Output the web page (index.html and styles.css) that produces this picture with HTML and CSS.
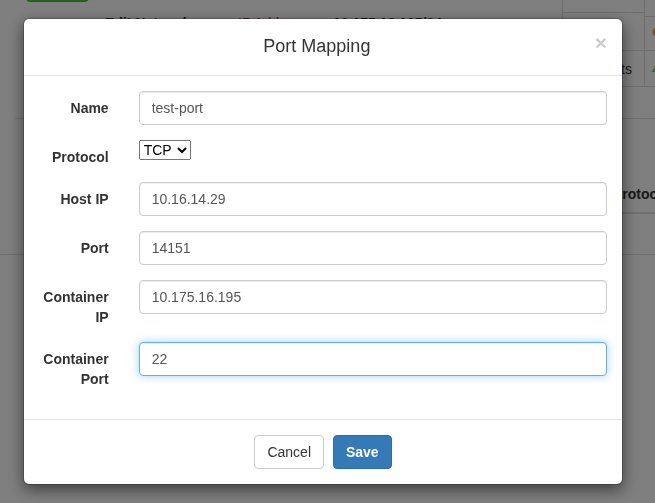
FILE: index.html
```html
<!DOCTYPE html>
<html lang="en">
<head>
<meta charset="utf-8">
<title>Port Mapping</title>
<link rel="stylesheet" href="styles.css">
</head>
<body>
<div class="page">
  <div class="top">
    <div class="main">
      <div class="btn-stub"></div>
      <div class="info-line"><span class="info-k">Edit Networks</span><span class="info-ip">IP Address</span><span class="info-v">10.175.16.195/24</span></div>
    </div>
    <div class="c2"></div><div class="c3"></div>
    <div class="c2"></div><div class="c3"><span class="orange">e</span></div>
    <div class="c2 txt">Contexts</div><div class="c3"><span class="green">4</span></div>
  </div>
  <div class="divider"></div>
  <div class="tbl">
    <div class="th-row"><div class="th"></div><div class="th">Name</div><div class="th">Host</div><div class="th">Container</div><div class="th">Protocol</div></div>
    <div class="td-row"></div>
  </div>
</div>

<div class="backdrop"></div>

<div class="modal">
  <div class="dialog">
    <div class="content">
      <div class="header">
        <button class="close" type="button">×</button>
        <h4 class="title">Port Mapping</h4>
      </div>
      <div class="body">
        <form class="form">
          <div class="group">
            <label class="lbl">Name</label>
            <div class="field"><input class="control" type="text" value="test-port"></div>
          </div>
          <div class="group">
            <label class="lbl">Protocol</label>
            <div class="field"><select class="select"><option>TCP</option><option>UDP</option></select></div>
          </div>
          <div class="group">
            <label class="lbl">Host IP</label>
            <div class="field"><input class="control" type="text" value="10.16.14.29"></div>
          </div>
          <div class="group">
            <label class="lbl">Port</label>
            <div class="field"><input class="control" type="text" value="14151"></div>
          </div>
          <div class="group">
            <label class="lbl">Container IP</label>
            <div class="field"><input class="control" type="text" value="10.175.16.195"></div>
          </div>
          <div class="group">
            <label class="lbl">Container Port</label>
            <div class="field"><input class="control focused" type="text" value="22"></div>
          </div>
        </form>
      </div>
      <div class="footer">
        <button class="btn btn-default" type="button">Cancel</button>
        <button class="btn btn-primary" type="button">Save</button>
      </div>
    </div>
  </div>
</div>
</body>
</html>
```

FILE: styles.css
```css
* { box-sizing: border-box; }

html, body {
  margin: 0;
  padding: 0;
  height: 100%;
  overflow: hidden;
}

body {
  font-family: "Liberation Sans", Arial, Helvetica, sans-serif;
  font-size: 14px;
  line-height: 20px;
  color: #333;
  background: #fff;
}

/* ---------- page behind the modal ---------- */
.page {
  width: 760px;
}

.top {
  display: grid;
  grid-template-columns: 562px 83px 1fr;
  grid-template-rows: 13px 38px 36px;
  padding-bottom: 31px;
}

.main {
  grid-row: 1 / 4;
  grid-column: 1;
}

.btn-stub {
  width: 63px;
  height: 34px;
  margin: -32px 0 0 26px;
  background: #5cb85c;
  border: 1px solid #4cae4c;
  border-radius: 4px;
}

.info-line {
  display: flex;
  margin-top: 11px;
  padding-left: 105px;
  color: #333;
}

.info-k { width: 133px; font-weight: bold; }
.info-ip { width: 95px; color: #a94442; }
.info-v { font-weight: bold; }

.c2 {
  border-left: 1px solid #ddd;
  border-right: 1px solid #ddd;
  border-bottom: 1px solid #ddd;
}

.c3 {
  border-bottom: 1px solid #ddd;
  padding: 8px 7px;
}

.txt {
  text-align: right;
  padding: 8px 12px 0 0;
  color: #333;
}

.orange { color: #f0ad4e; font-weight: bold; }
.green { color: #5cb85c; }

.divider {
  margin-left: 15px;
  border-top: 1px solid #ddd;
}

.tbl {
  margin-top: 57px;
}

.th-row {
  display: grid;
  grid-template-columns: 16px 200px 200px 165px 1fr;
  margin-left: 24px;
  border-bottom: 2px solid #ddd;
}

.th {
  padding: 8px;
  font-weight: bold;
}

.th:first-child {
  padding: 8px 0;
}

.td-row {
  height: 41px;
  border-bottom: 1px solid #ddd;
}

/* ---------- backdrop ---------- */
.backdrop {
  position: fixed;
  inset: 0;
  background: rgba(0, 0, 0, 0.5);
}

/* ---------- modal ---------- */
.modal {
  position: fixed;
  inset: 0;
}

.dialog {
  width: 600px;
  margin: 18px 0 0 23px;
}

.content {
  background: #fff;
  border: 1px solid rgba(0, 0, 0, 0.2);
  border-radius: 6px;
  box-shadow: 0 5px 15px rgba(0, 0, 0, 0.5);
  background-clip: padding-box;
}

.header {
  padding: 15px;
  border-bottom: 1px solid #e5e5e5;
}

.title {
  margin: 0;
  font-size: 18px;
  font-weight: normal;
  line-height: 1.42857143;
  text-align: center;
  color: #333;
}

.close {
  float: right;
  margin-top: -2px;
  padding: 0;
  border: 0;
  background: transparent;
  font-family: "Liberation Sans", Arial, sans-serif;
  font-size: 21px;
  font-weight: bold;
  line-height: 1;
  color: #000;
  opacity: 0.2;
  text-shadow: 0 1px 0 #fff;
  cursor: pointer;
}

.body {
  padding: 15px;
}

.form {
  margin: 0;
}

.group {
  display: flex;
  margin: 0 -15px 15px;
}

.lbl {
  width: 16.66666667%;
  padding: 7px 15px 0;
  text-align: right;
  font-weight: bold;
  line-height: 20px;
  color: #333;
}

.field {
  width: 83.33333333%;
  padding: 0 15px;
}

.control {
  display: block;
  width: 100%;
  height: 34px;
  padding: 6px 12px;
  font-family: inherit;
  font-size: 14px;
  line-height: 1.42857143;
  color: #555;
  background: #fff;
  border: 1px solid #ccc;
  border-radius: 4px;
  box-shadow: inset 0 1px 1px rgba(0, 0, 0, 0.075);
  outline: none;
}

.control.focused {
  border-color: #66afe9;
  box-shadow: inset 0 1px 1px rgba(0, 0, 0, 0.075), 0 0 8px rgba(102, 175, 233, 0.6);
}

.select {
  font-family: "Liberation Sans", Arial, sans-serif;
  font-size: 14px;
  color: #000;
  margin: 0;
  vertical-align: top;
}

.footer {
  padding: 15px;
  text-align: center;
  border-top: 1px solid #e5e5e5;
}

.btn {
  display: inline-block;
  margin: 0;
  padding: 6px 12px;
  font-family: inherit;
  font-size: 14px;
  line-height: 1.42857143;
  border: 1px solid transparent;
  border-radius: 4px;
  cursor: pointer;
  vertical-align: middle;
}

.btn + .btn {
  margin-left: 5px;
}

.btn-default {
  color: #333;
  background: #fff;
  border-color: #ccc;
}

.btn-primary {
  color: #fff;
  background: #337ab7;
  border-color: #2e6da4;
  font-weight: bold;
}
```
